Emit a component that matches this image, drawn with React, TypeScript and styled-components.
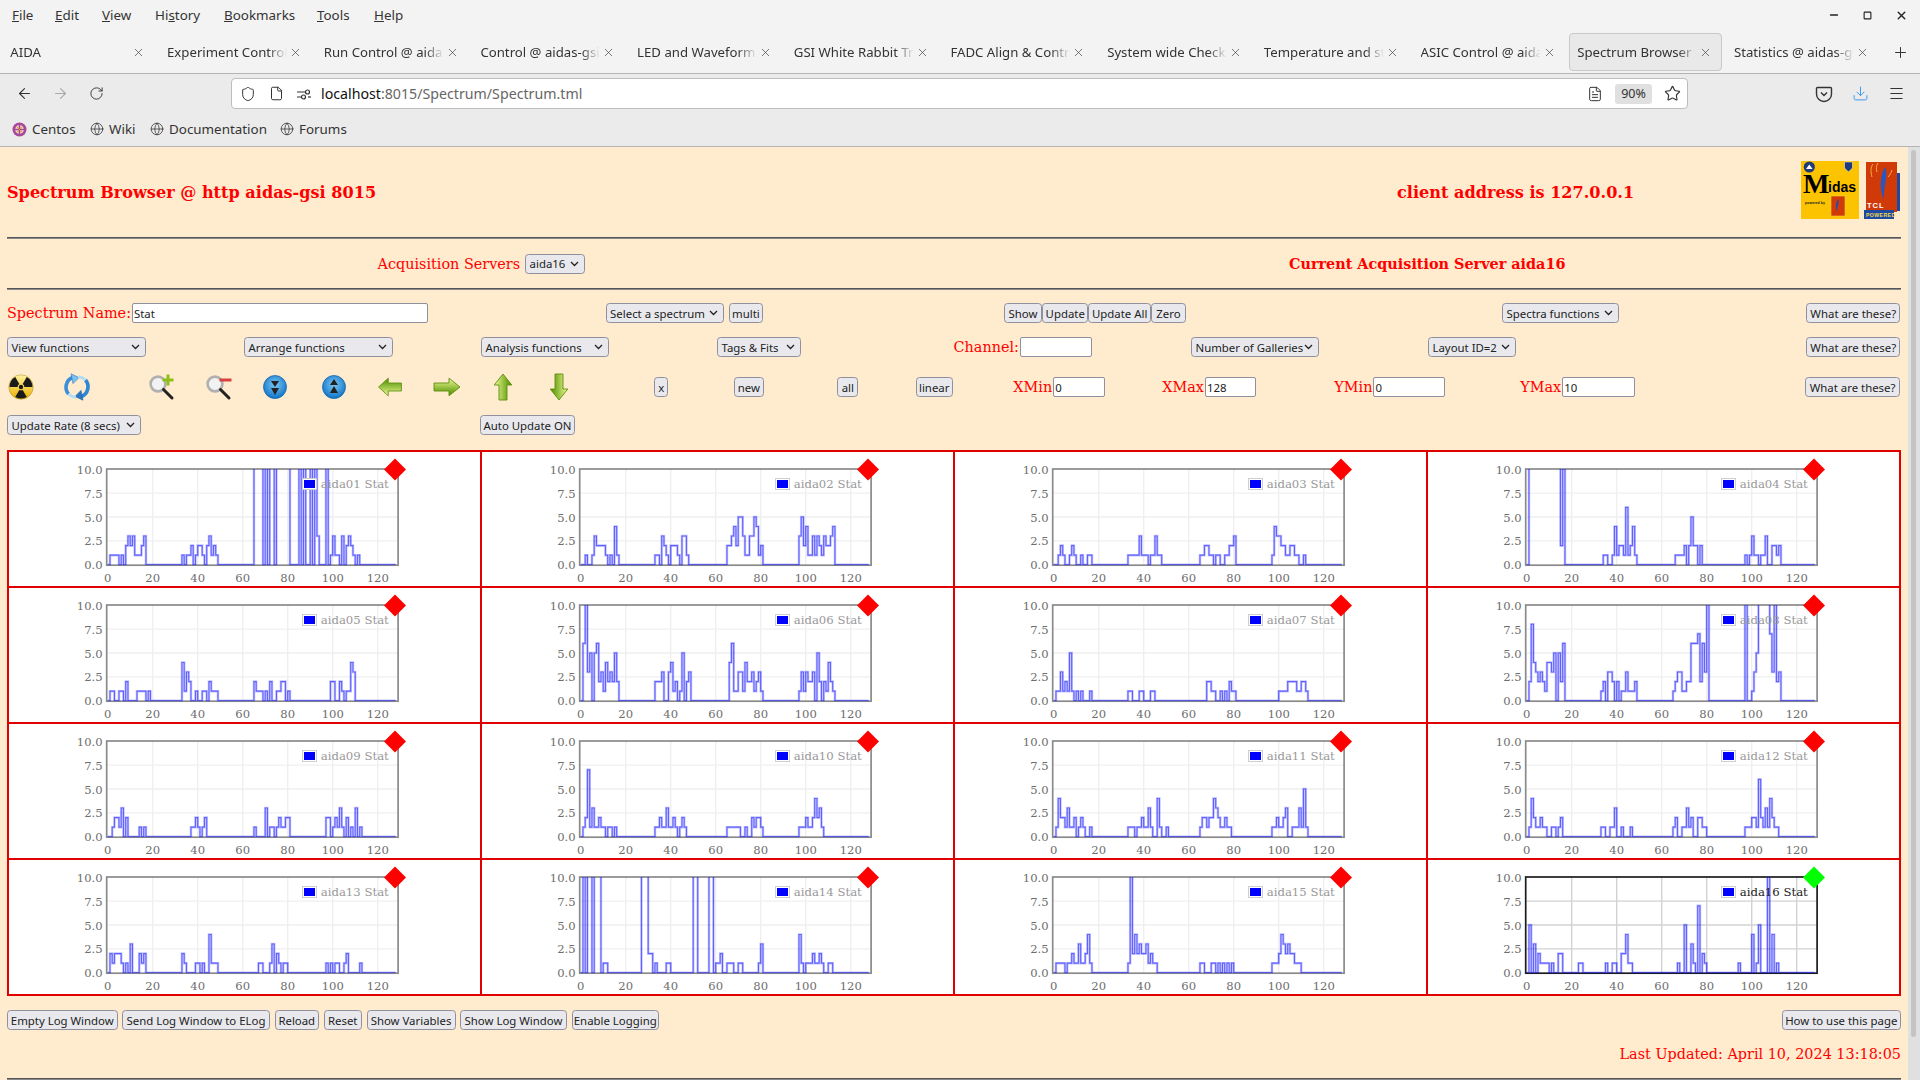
import React from "react";
import styled, { createGlobalStyle } from "styled-components";
import {
  ArrowLeft, ArrowRight, RotateCw, Shield, File, FileText, Star, Download, Menu, Globe, X, Plus, Minus, Square,
} from "lucide-react";

const UI = `"Noto Sans", "Open Sans", sans-serif`;
const SERIF = `"DejaVu Serif", "Liberation Serif", serif`;

const Global = createGlobalStyle`
  html, body { margin: 0; padding: 0; height: 1080px; overflow: hidden; background: #f3f3f3; }
  #root { height: 1080px; }
  * { box-sizing: border-box; }
`;

const Shell = styled.div`
  width: 1920px; height: 1080px; display: flex; flex-direction: column; overflow: hidden;
  font-family: ${UI}; color: #222;
`;

/* ---------- browser chrome ---------- */
const MenuBar = styled.div`
  height: 30px; display: flex; align-items: center; background: #f3f3f3; font-size: 13.4px; color: #333;
  padding-left: 12px;
`;
const MenuItem = styled.span<{ $w: number }>`
  width: ${(p) => p.$w}px;
`;
const Mnemonic = styled.span`
  text-decoration: underline;
`;
const WindowButtons = styled.div`
  margin-left: auto; display: flex; align-items: center; gap: 23px; padding-right: 12px; color: #222;
`;
const TabBar = styled.div`
  height: 44px; display: flex; align-items: flex-start; padding: 3px 0 0 0; background: #f3f3f3;
  border-bottom: 1px solid #b4b4b4;
`;
const Tab = styled.div<{ $active?: boolean }>`
  width: 153px; height: 38px; margin: 0 1.85px; flex: none; display: flex; align-items: center; padding: 0 7.5px;
  font-size: 13.2px; color: #333; border-radius: 4px; border: 1px solid ${(p) => (p.$active ? "#c8c8c8" : "transparent")};
  background: ${(p) => (p.$active ? "#e9e9e9" : "transparent")};
`;
const TabTitle = styled.span`
  width: 120px; flex: none; overflow: hidden; white-space: nowrap;
  mask-image: linear-gradient(to right, #000 84%, transparent 100%);
`;
const TabClose = styled.span`
  display: flex; margin-left: 2px; color: #444;
`;
const NewTab = styled.div`
  display: flex; margin: 11px 0 0 12px; color: #333;
`;
const NavBar = styled.div`
  height: 39px; display: flex; align-items: center; background: #ebebeb;
`;
const NavButton = styled.span<{ $w: number; $dim?: boolean; $color?: string }>`
  width: ${(p) => p.$w}px; display: flex; justify-content: center; flex: none;
  color: ${(p) => (p.$dim ? "#a8a8a8" : p.$color ?? "#333")};
`;
const UrlBox = styled.div`
  width: 1457px; height: 31px; background: #fff; border: 1px solid #bdbdbd; border-radius: 4px;
  display: flex; align-items: center; margin-left: 111px; flex: none; color: #333;
`;
const UrlIcon = styled.span<{ $w: number }>`
  width: ${(p) => p.$w}px; display: flex; justify-content: center; flex: none;
`;
const UrlText = styled.span`
  font-size: 14.2px; color: #666; margin-left: 2px; flex: 1; white-space: nowrap;
`;
const UrlHost = styled.span`
  color: #111;
`;
const ZoomPill = styled.span`
  width: 37px; height: 20px; background: #e0e0e0; border-radius: 3px; font-size: 12.5px; display: flex;
  align-items: center; justify-content: center; color: #333; margin: 0 5px 0 8px; flex: none;
`;
const NavActions = styled.div`
  margin-left: auto; display: flex; padding-right: 6px;
`;
const BookmarkBar = styled.div`
  height: 34px; display: flex; align-items: center; background: #ebebeb; border-bottom: 1px solid #b4b4b4;
  font-size: 13.4px; color: #333; padding-left: 12px; padding-bottom: 1px;
`;
const Bookmark = styled.span<{ $w: number }>`
  width: ${(p) => p.$w}px; display: flex; align-items: center; gap: 5px; flex: none; color: #333;
`;

/* ---------- page ---------- */
const PageArea = styled.div`
  flex: 1; display: flex; min-height: 0; background: #ffebcd;
`;
const Page = styled.div`
  width: 1908px; flex: none; padding: 0 7px; font-family: ${SERIF}; color: #f00; overflow: hidden;
`;
const ScrollTrack = styled.div`
  width: 12px; flex: none; background: #e0e0e0; padding: 3px 3px 0 3px;
`;
const ScrollThumb = styled.div`
  height: 887px; width: 5px; border-radius: 3px; background: #c4c4c4;
`;

const gridCols = (starts: number[]) => {
  const parts: string[] = [];
  for (let i = 1; i < starts.length; i++) parts.push(`${starts[i] - starts[i - 1]}px`);
  parts.push("1fr");
  return parts.join(" ");
};
const ControlRow = styled.div<{ $starts: number[]; $top?: number; $h?: number }>`
  display: grid; grid-template-columns: ${(p) => gridCols(p.$starts)};
  grid-template-rows: ${(p) => p.$h ?? 20}px;
  margin-top: ${(p) => p.$top ?? 0}px; height: ${(p) => p.$h ?? 20}px; align-items: center;
`;
const Heading = styled.span`
  font-weight: 700; font-size: 16.1px; white-space: nowrap;
`;
const SubHeading = styled.span`
  font-weight: 700; font-size: 14.4px; white-space: nowrap;
`;
const Logos = styled.div`
  display: flex; gap: 5px; margin-top: -5px;
`;
const Rule = styled.div<{ $top?: number }>`
  height: 2px; margin-top: ${(p) => p.$top ?? 0}px; border-top: 1px solid #555; border-bottom: 1px solid #8a8a8a;
`;
const Field = styled.div<{ $gap?: number }>`
  display: flex; align-items: center; gap: ${(p) => p.$gap ?? 1}px; white-space: nowrap;
`;
const FieldLabel = styled.span`
  font-size: 14.4px;
`;
const Button = styled.button<{ $w: number }>`
  width: ${(p) => p.$w}px; height: 20px; padding: 0; background: #e9e9ed; border: 1px solid #8f8f9d; border-radius: 3.5px;
  font: 11.4px ${UI}; color: #222; white-space: nowrap; flex: none; margin: 0;
`;
const SelectBox = styled.div<{ $w: number }>`
  width: ${(p) => p.$w}px; height: 20px; background: #e9e9ed; border: 1px solid #8f8f9d; border-radius: 3.5px;
  display: flex; align-items: center; justify-content: space-between; padding: 0 5px 0 3.5px;
  font: 11.4px ${UI}; color: #222; white-space: nowrap; flex: none;
`;
const TextBox = styled.input<{ $w: number }>`
  width: ${(p) => p.$w}px; height: 20px; background: #fff; border: 1px solid #8f8f9d; border-radius: 2px;
  padding: 0 1px; font: 11.4px ${UI}; color: #222; flex: none; margin: 0; outline: none;
`;
const ToolIcon = styled.svg`
  width: 28px; height: 28px; display: block;
`;
const Gallery = styled.div`
  margin-top: 15px; display: grid; grid-template-columns: repeat(4, 471px); grid-auto-rows: 134px; gap: 2px;
  width: 1894px; padding: 2px; background: #e00000;
`;
const Cell = styled.div`
  background: #fff; overflow: hidden;
`;
const ChartSvg = styled.svg`
  width: 471px; height: 134px; display: block; font-family: ${SERIF};
`;
const ButtonGroup = styled.div`
  display: flex; gap: 4.5px;
`;
const BottomRow = styled.div`
  margin-top: 14px; height: 20px; display: flex; justify-content: space-between; align-items: center;
`;
const Updated = styled.div`
  margin-top: 15px; height: 18px; line-height: 18px; text-align: right; font-size: 14.4px;
`;

/* ---------- chart data: "bin:value" change points ---------- */
const SERIES: string[] = [
  "1:1 5:0 6:1 7:0 8:2 9:3 10:2 11:3 12:1 15:2 16:3 17:0 33:1 34:0 35:1 37:2 38:0 39:1 40:2 42:1 43:0 44:2 45:3 46:1 47:2 48:1 49:0 65:12 69:0 70:12 71:0 72:12 74:0 75:12 81:0 85:12 86:0 87:12 88:0 90:12 91:0 92:12 93:3 94:0 97:12 98:0 99:1 100:3 101:1 103:0 104:3 105:0 106:2 107:3 108:2 109:1 110:0 111:1 112:0",
  "2:1 3:0 5:1 6:3 7:2 11:1 12:0 13:1 14:0 15:4 16:1 17:0 33:1 35:0 36:3 37:2 38:1 39:0 40:2 43:1 44:0 45:3 47:1 48:0 65:2 67:3 68:4 69:2 70:5 72:3 73:1 75:3 77:5 78:4 79:1 80:2 81:0 97:3 98:5 99:2 100:4 101:1 103:3 104:1 105:3 106:2 107:1 108:3 109:2 111:3 112:4 113:0",
  "2:1 3:2 4:1 5:0 7:1 8:2 9:1 10:0 12:1 13:0 15:1 17:0 33:1 37:1 38:3 39:1 42:0 43:1 45:3 46:1 48:0 65:1 67:2 69:1 71:0 72:1 74:0 76:1 78:2 80:3 81:0 97:1 98:4 99:3 101:2 103:1 105:2 107:1 109:0 111:1 112:0",
  "1:12 15:2 16:12 17:0 34:1 36:0 38:1 39:4 40:1 41:2 43:1 44:6 45:1 46:2 47:4 48:1 49:0 66:1 70:2 71:0 72:2 73:5 74:2 76:0 77:2 78:0 97:1 98:0 99:1 100:3 101:1 103:0 104:1 106:3 107:0 109:2 111:1 112:2 113:0",
  "1:1 3:0 5:1 7:0 8:2 9:0 13:1 17:0 18:1 19:0 33:4 34:1 35:3 36:2 37:0 39:1 40:0 42:1 44:0 45:2 46:1 49:0 65:2 66:1 69:0 70:1 71:0 72:2 73:0 75:1 77:2 79:0 80:1 81:0 99:2 101:0 103:2 104:1 105:0 106:1 108:4 109:3 110:0",
  "1:6 2:12 3:3 4:5 5:0 6:5 7:6 8:2 9:3 10:1 11:4 12:2 13:3 14:2 15:5 16:2 17:0 33:2 36:3 37:0 39:3 40:4 41:1 42:2 43:0 44:1 45:5 46:0 47:2 48:3 49:0 66:4 67:6 68:1 70:3 72:1 73:4 74:2 76:3 77:1 78:2 79:3 80:1 81:0 97:1 98:3 99:1 100:3 101:2 103:3 104:0 105:5 106:2 107:0 108:2 109:1 110:4 111:2 112:1 113:0",
  "1:1 3:3 4:1 5:2 6:1 7:5 8:1 9:0 10:1 11:0 12:1 13:0 16:1 17:0 33:1 35:0 38:1 40:0 43:1 45:0 68:2 70:1 72:0 74:1 75:0 76:1 77:0 78:2 79:1 81:0 100:1 104:2 108:1 110:2 112:1 113:0",
  "1:2 2:8 3:4 4:3 5:2 6:3 7:2 8:1 9:4 11:3 12:5 13:0 14:5 15:2 16:6 17:0 33:1 34:2 35:0 36:3 38:2 39:0 40:2 41:0 42:1 44:3 45:1 48:2 49:0 65:1 66:2 67:3 69:1 71:2 73:6 76:7 77:2 78:6 79:3 80:12 81:0 97:12 98:0 100:1 101:3 102:5 103:12 108:7 109:3 110:12 111:2 112:3 113:0",
  "2:1 3:2 5:1 6:3 7:0 8:2 9:0 14:1 15:0 16:1 17:0 37:1 39:2 40:1 41:0 42:1 43:2 44:0 65:1 66:0 70:3 71:0 72:1 74:0 75:1 76:2 77:1 79:2 81:0 97:2 99:0 100:1 101:2 102:1 103:3 104:1 105:0 106:2 107:0 108:1 109:0 110:3 111:0 112:1 113:0",
  "1:1 2:2 3:7 4:1 5:3 6:1 8:2 9:1 11:0 12:1 14:0 15:1 16:0 33:1 35:2 36:1 38:3 39:1 41:2 42:1 43:0 44:1 45:2 46:1 47:0 65:1 71:0 73:1 74:0 76:2 77:1 78:2 80:1 81:0 97:1 100:2 101:1 103:2 104:4 105:2 106:3 107:1 108:0",
  "1:1 2:4 3:2 5:1 6:3 7:1 9:2 10:0 11:1 12:2 13:1 14:0 16:1 17:0 33:1 36:0 37:1 39:2 40:1 42:3 43:1 44:0 46:4 47:1 48:0 50:1 51:0 65:1 66:2 68:1 69:2 71:4 72:3 73:2 74:1 76:2 77:1 79:0 97:1 99:2 100:1 102:2 103:3 104:0 106:1 109:3 110:1 111:5 112:1 113:0",
  "1:1 2:4 3:2 4:1 6:2 7:1 9:0 11:1 13:0 14:1 15:2 16:0 33:1 35:0 37:1 39:3 40:0 42:1 43:0 46:1 47:0 65:1 66:2 67:0 69:1 71:3 72:1 73:2 74:0 76:2 78:1 80:0 97:1 100:2 102:1 103:6 104:2 105:1 106:3 107:1 108:4 109:2 110:1 112:0",
  "1:2 2:1 3:2 6:1 7:0 8:1 9:0 10:3 11:0 14:2 15:1 16:2 17:0 33:2 34:1 35:0 39:1 41:0 42:1 43:0 45:4 46:1 49:0 67:1 69:0 72:1 73:3 74:0 75:2 76:1 77:0 78:1 80:0 97:1 98:0 99:1 100:0 101:1 103:0 105:1 106:2 107:0 112:1 113:0",
  "1:12 2:0 3:12 5:0 6:12 9:0 10:1 12:0 27:12 30:2 32:0 33:1 34:0 38:1 40:0 50:12 52:0 57:12 59:0 60:1 62:2 63:0 65:1 68:0 70:1 72:0 79:1 80:3 81:0 97:4 98:1 99:0 100:1 103:2 104:1 106:2 107:1 108:0 110:1 112:0",
  "1:1 5:0 6:1 8:2 9:1 11:3 12:1 14:2 15:4 16:1 17:0 33:1 34:12 35:2 36:4 37:2 38:3 39:2 41:3 42:1 43:2 44:1 46:0 65:1 67:0 70:1 72:0 73:1 74:0 75:1 76:0 77:1 78:0 79:1 80:0 97:1 100:2 101:4 102:3 103:2 104:3 105:2 107:1 110:0",
  "1:5 2:0 3:3 4:0 5:2 6:1 10:0 11:1 12:0 14:2 16:0 23:1 25:0 35:1 36:0 38:1 40:0 42:2 44:4 45:1 47:0 67:1 68:0 70:5 71:0 73:3 74:1 75:0 76:7 77:0 78:2 79:1 80:0 94:1 95:0 100:4 101:0 102:1 103:5 104:0 107:12 108:0 109:4 110:0 111:1 112:0",
];

const X0 = 98.7, XS = 2.25, Y0 = 112.7, YS = 9.55;
const px = (x: number) => X0 + XS * x;
const py = (y: number) => Y0 - YS * y;

const seriesPath = (s: string) => {
  let d = `M${px(0)} ${py(0)}`;
  s.split(" ").forEach((pair) => {
    const [x, y] = pair.split(":").map(Number);
    d += `H${px(x).toFixed(2)}V${py(y).toFixed(2)}`;
  });
  return d + `H${px(128)}`;
};

const Chart: React.FC<{ index: number; selected: boolean }> = ({ index, selected }) => {
  const name = `aida${String(index + 1).padStart(2, "0")} Stat`;
  const clip = `plot-${index}`;
  const frame = selected ? "#1c1c1c" : "#8a8a8a";
  const grid = selected ? "#d2d2d2" : "#efefef";
  const path = seriesPath(SERIES[index]);
  return (
    <ChartSvg viewBox="0 0 471 134">
      {[20, 40, 60, 80, 100, 120].map((t) => (
        <line key={t} x1={px(t)} x2={px(t)} y1={17} y2={113} stroke={grid} strokeWidth={1.4} />
      ))}
      {[2.5, 5, 7.5].map((t) => (
        <line key={t} x1={98} x2={389} y1={py(t)} y2={py(t)} stroke={grid} strokeWidth={1.4} />
      ))}
      <rect x={97.7} y={17} width={291.4} height={96.2} fill="none" stroke={frame} strokeWidth={1.7} />
      <clipPath id={clip}>
        <rect x={97.7} y={17} width={291.4} height={96.2} />
      </clipPath>
      <g clipPath={`url(#${clip})`} fill="none" stroke="#1a1aff">
        <path d={path} strokeOpacity={0.26} strokeWidth={2.5} />
        <path d={path} strokeOpacity={0.58} strokeWidth={1.1} />
      </g>
      {[["10.0", 0], ["7.5", 2.5], ["5.0", 5], ["2.5", 7.5], ["0.0", 10]].map(([label, k]) => (
        <text key={label as string} x={93.7} y={22 + (k as number) * 9.5} textAnchor="end" fontSize={11.6} fill="#6e6e6e">
          {label}
        </text>
      ))}
      {[0, 20, 40, 60, 80, 100, 120].map((t) => (
        <text key={t} x={px(t)} y={129.5} textAnchor="middle" fontSize={11.6} fill="#6e6e6e">{t}</text>
      ))}
      <rect x={293.5} y={26.5} width={14} height={11} fill="#fff" stroke="#cfcfcf" />
      <rect x={295} y={28} width={11} height={8} fill="#0000ff" />
      <text x={311.7} y={36} fontSize={11.7} fill={selected ? "#222" : "#999"}>{name}</text>
      <polygon points="386,6.5 397,17.5 386,28.5 375,17.5" fill={selected ? "#00ff00" : "#ff0000"} />
    </ChartSvg>
  );
};

/* ---------- tool bar drawings ---------- */
const blade = (a: number) => {
  const r = (d: number) => (d * Math.PI) / 180;
  const p = (R: number, d: number) => `${(14 + R * Math.cos(r(d))).toFixed(2)} ${(14 + R * Math.sin(r(d))).toFixed(2)}`;
  return `M${p(3.4, a - 30)}L${p(11.5, a - 30)}A11.5 11.5 0 0 1 ${p(11.5, a + 30)}L${p(3.4, a + 30)}A3.4 3.4 0 0 0 ${p(3.4, a - 30)}Z`;
};
const Radiation = () => (
  <ToolIcon viewBox="0 0 28 28">
    <defs>
      <linearGradient id="rad" x1="0" y1="0" x2="0" y2="1">
        <stop offset="0" stopColor="#fff2a0" />
        <stop offset="1" stopColor="#e8b000" />
      </linearGradient>
    </defs>
    <circle cx="14" cy="14" r="12.2" fill="url(#rad)" stroke="#a88a20" strokeWidth=".5" />
    <path d={blade(-150)} fill="#1a1a1a" />
    <path d={blade(-30)} fill="#1a1a1a" />
    <path d={blade(90)} fill="#1a1a1a" />
    <circle cx="14" cy="14" r="2.2" fill="#1a1a1a" />
  </ToolIcon>
);
const Refresh = () => (
  <ToolIcon viewBox="0 0 28 28">
    <path d="M5.5 21A10.5 10.5 0 0 1 9.5 4.5" fill="none" stroke="#3a8fd8" strokeWidth="3.6" />
    <path d="M8 .8l8 3.8-6 6z" fill="#7cc0f0" stroke="#2b78c0" strokeWidth=".6" />
    <path d="M22.5 7A10.5 10.5 0 0 1 18.5 23.5" fill="none" stroke="#2f86d2" strokeWidth="3.6" />
    <path d="M20 27.2l-8-3.8 6-6z" fill="#2b78c0" stroke="#1d5fa5" strokeWidth=".6" />
    <path d="M15 4a10.5 10.5 0 0 1 7.5 3" fill="none" stroke="#b5dcf7" strokeWidth="2.8" />
    <path d="M13 24a10.5 10.5 0 0 1-7.5-3" fill="none" stroke="#b5dcf7" strokeWidth="2.8" />
  </ToolIcon>
);
const Magnifier: React.FC<{ plus?: boolean }> = ({ plus }) => (
  <ToolIcon viewBox="0 0 28 28">
    <circle cx="10" cy="11" r="7.4" fill="#f2f2f2" stroke="#b0b0b0" strokeWidth="2.6" />
    <line x1="15.5" y1="16.5" x2="24" y2="25" stroke="#222" strokeWidth="3" strokeLinecap="round" />
    {plus ? (
      <path d="M20 1.5v11M14.5 7h11" stroke="#8ebf18" strokeWidth="3" />
    ) : (
      <path d="M14.5 7h12" stroke="#d84040" strokeWidth="3" />
    )}
  </ToolIcon>
);
const BlueRound: React.FC<{ up?: boolean; id: string }> = ({ up, id }) => (
  <ToolIcon viewBox="0 0 28 28">
    <defs>
      <radialGradient id={id} cx=".5" cy=".4" r=".6">
        <stop offset="0" stopColor="#7cc8f4" />
        <stop offset="1" stopColor="#0f74c8" />
      </radialGradient>
    </defs>
    <circle cx="14" cy="14" r="11.5" fill={`url(#${id})`} stroke="#0c5fa8" strokeWidth=".7" />
    {up ? (
      <path d="M14 6l-4 6h8zM14 13l-4 7h8z" fill="#222" />
    ) : (
      <path d="M10 8h8l-4 6zM10 15h8l-4 7z" fill="#222" />
    )}
  </ToolIcon>
);
const GreenArrow: React.FC<{ dir: "left" | "right" | "up" | "down" }> = ({ dir }) => {
  const rot = { right: 0, down: 90, left: 180, up: 270 }[dir];
  const id = `arrow-${dir}`;
  const sx = dir === "right" ? 1 : dir === "left" ? 0.88 : 1;
  return (
    <ToolIcon viewBox="0 0 28 28">
      <defs>
        <linearGradient id={id} gradientUnits="userSpaceOnUse" x1="0" y1="6" x2="0" y2="22">
          <stop offset="0" stopColor="#d8ec80" />
          <stop offset="1" stopColor="#5f9a0c" />
        </linearGradient>
      </defs>
      <g transform={`rotate(${rot} 14 14) translate(14 14) scale(${sx} 0.8) translate(-14 -14)`}>
        <path d="M1 9h15V3l11 11-11 11v-6H1z" fill={`url(#${id})`} stroke="#5d8f10" strokeWidth="1" />
      </g>
    </ToolIcon>
  );
};

const MidasLogo = () => (
  <svg width="58" height="58" viewBox="0 0 58 58" fontFamily={`"Liberation Sans", sans-serif`}>
    <rect width="58" height="58" fill="#fcc400" />
    <circle cx="8.3" cy="6" r="5.6" fill="#1f3a78" />
    <path d="M5 8l3.3-4.5L11.6 8z" fill="#fff" />
    <path d="M43.5 1h8v6l-4 4-4-4z" fill="#1f3a78" stroke="#fff" strokeWidth=".5" />
    <text x="2" y="32" fontFamily={`"Liberation Serif", serif`} fontWeight="700" fontSize="28" fill="#000">M</text>
    <text x="27" y="31" fontWeight="700" fontSize="14" fill="#000">idas</text>
    <text x="4" y="43" fontWeight="700" fontSize="3.6" fill="#222">powered by</text>
    <rect x="30" y="35" width="14" height="20" fill="#d03a08" stroke="#f0d040" strokeWidth=".6" />
    <path d="M37 38c2 3-1 8-1 12 -2-3-1-8 1-12z" fill="#2a4aa8" />
  </svg>
);
const TclLogo = () => (
  <svg width="36" height="58" viewBox="0 0 36 58" fontFamily={`"Liberation Sans", sans-serif`}>
    <rect x="4" y="12" width="32" height="38" fill="#1d4aa0" />
    <rect x="2" y="1" width="31" height="50" fill="#d03a08" />
    <rect x="0" y="49" width="30" height="9" fill="#1d4aa0" />
    <path d="M21 6c4 8-2 20-1 32-5-8-4-24 1-32z" fill="#2a56c0" />
    <path d="M9 3c-3 4-2 9-1 13M14 2c-2 3-2 6-1 9M28 9c-1 3-2 5-4 7" stroke="#f0b040" strokeWidth="1" fill="none" />
    <text x="3" y="47" fontWeight="700" fontSize="7.5" letterSpacing="1" fill="#fff">TCL</text>
    <text x="2" y="56" fontWeight="700" fontSize="5.2" letterSpacing=".4" fill="#f5d84a">POWERED</text>
  </svg>
);

const Chevron = () => (
  <svg width="9" height="6" viewBox="0 0 9 6">
    <path d="M1 1l3.5 3.5L8 1" fill="none" stroke="#222" strokeWidth="1.3" />
  </svg>
);
const Select: React.FC<{ w: number; children: React.ReactNode }> = ({ w, children }) => (
  <SelectBox $w={w}>
    <span>{children}</span>
    <Chevron />
  </SelectBox>
);

const PermIcon = () => (
  <svg width="16" height="16" viewBox="0 0 16 16" fill="none" stroke="#333" strokeWidth="1.2">
    <path d="M1 6h8M1 11h4" />
    <circle cx="11.5" cy="6" r="2" />
    <circle cx="7.5" cy="11" r="2" />
    <path d="M12 11h3" />
  </svg>
);
const PocketIcon = () => (
  <svg width="18" height="18" viewBox="0 0 18 18" fill="none" stroke="#333" strokeWidth="1.4">
    <path d="M2.5 2.5h13a1 1 0 0 1 1 1V9a7.5 7.5 0 0 1-15 0V3.5a1 1 0 0 1 1-1z" />
    <path d="M6 7.5l3 3 3-3" />
  </svg>
);
const CentosIcon = () => (
  <svg width="15" height="15" viewBox="0 0 15 15">
    <circle cx="7.5" cy="7.5" r="7" fill="#a8489a" />
    <circle cx="7.5" cy="7.5" r="4.4" fill="#f0d9c8" />
    <path d="M7.5 3v9M3 7.5h9" stroke="#a8489a" strokeWidth="1.6" />
    <path d="M4.4 4.4l6.2 6.2M10.6 4.4l-6.2 6.2" stroke="#e0a040" strokeWidth="1" />
  </svg>
);

const TABS = [
  "AIDA", "Experiment Control", "Run Control @ aidas-gsi", "Control @ aidas-gsi", "LED and Waveform Control",
  "GSI White Rabbit Trigger", "FADC Align & Control", "System wide Checks", "Temperature and status",
  "ASIC Control @ aidas-gsi", "Spectrum Browser", "Statistics @ aidas-gsi",
];

const BOTTOM: [string, number][] = [
  ["Empty Log Window", 110.5], ["Send Log Window to ELog", 148], ["Reload", 44.5], ["Reset", 38.5],
  ["Show Variables", 89], ["Show Log Window", 107], ["Enable Logging", 87.5],
];

const abs = (xs: number[]) => xs.map((x) => x - 7);

export default function App() {
  return (
    <Shell>
      <Global />
      <MenuBar>
        <MenuItem $w={43}><Mnemonic>F</Mnemonic>ile</MenuItem>
        <MenuItem $w={47}><Mnemonic>E</Mnemonic>dit</MenuItem>
        <MenuItem $w={53}><Mnemonic>V</Mnemonic>iew</MenuItem>
        <MenuItem $w={69}>Hi<Mnemonic>s</Mnemonic>tory</MenuItem>
        <MenuItem $w={93}><Mnemonic>B</Mnemonic>ookmarks</MenuItem>
        <MenuItem $w={57}><Mnemonic>T</Mnemonic>ools</MenuItem>
        <MenuItem $w={40}><Mnemonic>H</Mnemonic>elp</MenuItem>
        <WindowButtons>
          <Minus size={12} strokeWidth={2.6} />
          <Square size={9} strokeWidth={3} />
          <X size={13} strokeWidth={2.6} />
        </WindowButtons>
      </MenuBar>
      <TabBar>
        {TABS.map((t) => (
          <Tab key={t} $active={t === "Spectrum Browser"}>
            <TabTitle>{t}</TabTitle>
            <TabClose><X size={13} strokeWidth={1.3} /></TabClose>
          </Tab>
        ))}
        <NewTab><Plus size={17} strokeWidth={1.4} /></NewTab>
      </TabBar>
      <NavBar>
        <NavButton $w={48}><ArrowLeft size={17} strokeWidth={1.5} /></NavButton>
        <NavButton $w={24} $dim><ArrowRight size={17} strokeWidth={1.5} /></NavButton>
        <NavButton $w={48}><RotateCw size={15} strokeWidth={1.5} /></NavButton>
        <UrlBox>
          <UrlIcon $w={31}><Shield size={16} strokeWidth={1.5} /></UrlIcon>
          <UrlIcon $w={26}><File size={15} strokeWidth={1.6} /></UrlIcon>
          <UrlIcon $w={30}><PermIcon /></UrlIcon>
          <UrlText><UrlHost>localhost</UrlHost>:8015/Spectrum/Spectrum.tml</UrlText>
          <UrlIcon $w={24}><FileText size={16} strokeWidth={1.5} /></UrlIcon>
          <ZoomPill>90%</ZoomPill>
          <UrlIcon $w={30}><Star size={17} strokeWidth={1.6} /></UrlIcon>
        </UrlBox>
        <NavActions>
          <NavButton $w={36}><PocketIcon /></NavButton>
          <NavButton $w={36} $color="#3d9bf0"><Download size={17} strokeWidth={1.4} /></NavButton>
          <NavButton $w={36}><Menu size={17} strokeWidth={1.5} /></NavButton>
        </NavActions>
      </NavBar>
      <BookmarkBar>
        <Bookmark $w={78}><CentosIcon />Centos</Bookmark>
        <Bookmark $w={60}><Globe size={14} strokeWidth={1.3} />Wiki</Bookmark>
        <Bookmark $w={130}><Globe size={14} strokeWidth={1.3} />Documentation</Bookmark>
        <Bookmark $w={80}><Globe size={14} strokeWidth={1.3} />Forums</Bookmark>
      </BookmarkBar>
      <PageArea>
        <Page>
          <ControlRow $starts={abs([7, 1397, 1801])} $h={90}>
            <Heading>Spectrum Browser @ http aidas-gsi 8015</Heading>
            <Heading>client address is 127.0.0.1</Heading>
            <Logos><MidasLogo /><TclLogo /></Logos>
          </ControlRow>
          <Rule />
          <ControlRow $starts={abs([7, 377.5, 1289])} $h={49}>
            <span />
            <Field $gap={5}><FieldLabel>Acquisition Servers</FieldLabel><Select w={60}>aida16</Select></Field>
            <SubHeading>Current Acquisition Server aida16</SubHeading>
          </ControlRow>
          <Rule />
          <ControlRow $starts={abs([7, 605.6, 1004, 1502, 1806])} $top={13}>
            <Field><FieldLabel>Spectrum Name:</FieldLabel><TextBox $w={296} defaultValue="Stat" /></Field>
            <Field $gap={5}><Select w={118}>Select a spectrum</Select><Button $w={34.5}>multi</Button></Field>
            <Field $gap={0}><Button $w={38}>Show</Button><Button $w={46.5}>Update</Button><Button $w={62.5}>Update All</Button><Button $w={35}>Zero</Button></Field>
            <Select w={117}>Spectra functions</Select>
            <Button $w={94.5}>What are these?</Button>
          </ControlRow>
          <ControlRow $starts={abs([7, 244, 481, 717, 953.6, 1191, 1428, 1806])} $top={14}>
            <Select w={139}>View functions</Select>
            <Select w={149}>Arrange functions</Select>
            <Select w={128}>Analysis functions</Select>
            <Select w={84}>Tags &amp; Fits</Select>
            <Field><FieldLabel>Channel:</FieldLabel><TextBox $w={72} /></Field>
            <Select w={128}>Number of Galleries</Select>
            <Select w={88}>Layout ID=2</Select>
            <Button $w={94.5}>What are these?</Button>
          </ControlRow>
          <ControlRow
            $starts={abs([7.6, 63.5, 149, 205.6, 262, 320.7, 376.6, 433.8, 490, 546, 655, 734.7, 838, 916.4, 1014, 1163, 1335, 1521, 1806])}
            $top={20}
          >
            <Radiation />
            <Refresh />
            <Magnifier plus />
            <Magnifier />
            <BlueRound id="blue-down" />
            <BlueRound id="blue-up" up />
            <GreenArrow dir="left" />
            <GreenArrow dir="right" />
            <GreenArrow dir="up" />
            <GreenArrow dir="down" />
            <Field><Button $w={14}>x</Button></Field>
            <Field><Button $w={29.5}>new</Button></Field>
            <Field><Button $w={21}>all</Button></Field>
            <Field><Button $w={37}>linear</Button></Field>
            <Field><FieldLabel>XMin</FieldLabel><TextBox $w={52} defaultValue="0" /></Field>
            <Field><FieldLabel>XMax</FieldLabel><TextBox $w={51} defaultValue="128" /></Field>
            <Field><FieldLabel>YMin</FieldLabel><TextBox $w={72} defaultValue="0" /></Field>
            <Field><FieldLabel>YMax</FieldLabel><TextBox $w={73} defaultValue="10" /></Field>
            <Button $w={94.5}>What are these?</Button>
          </ControlRow>
          <ControlRow $starts={abs([7, 480])} $top={18}>
            <Select w={134}>Update Rate (8 secs)</Select>
            <Field><Button $w={95}>Auto Update ON</Button></Field>
          </ControlRow>
          <Gallery>
            {SERIES.map((_, i) => (
              <Cell key={i}><Chart index={i} selected={i === 15} /></Cell>
            ))}
          </Gallery>
          <BottomRow>
            <ButtonGroup>
              {BOTTOM.map(([b, w]) => <Button key={b} $w={w}>{b}</Button>)}
            </ButtonGroup>
            <Button $w={119.5}>How to use this page</Button>
          </BottomRow>
          <Updated>Last Updated: April 10, 2024 13:18:05</Updated>
          <Rule $top={15} />
        </Page>
        <ScrollTrack><ScrollThumb /></ScrollTrack>
      </PageArea>
    </Shell>
  );
}
